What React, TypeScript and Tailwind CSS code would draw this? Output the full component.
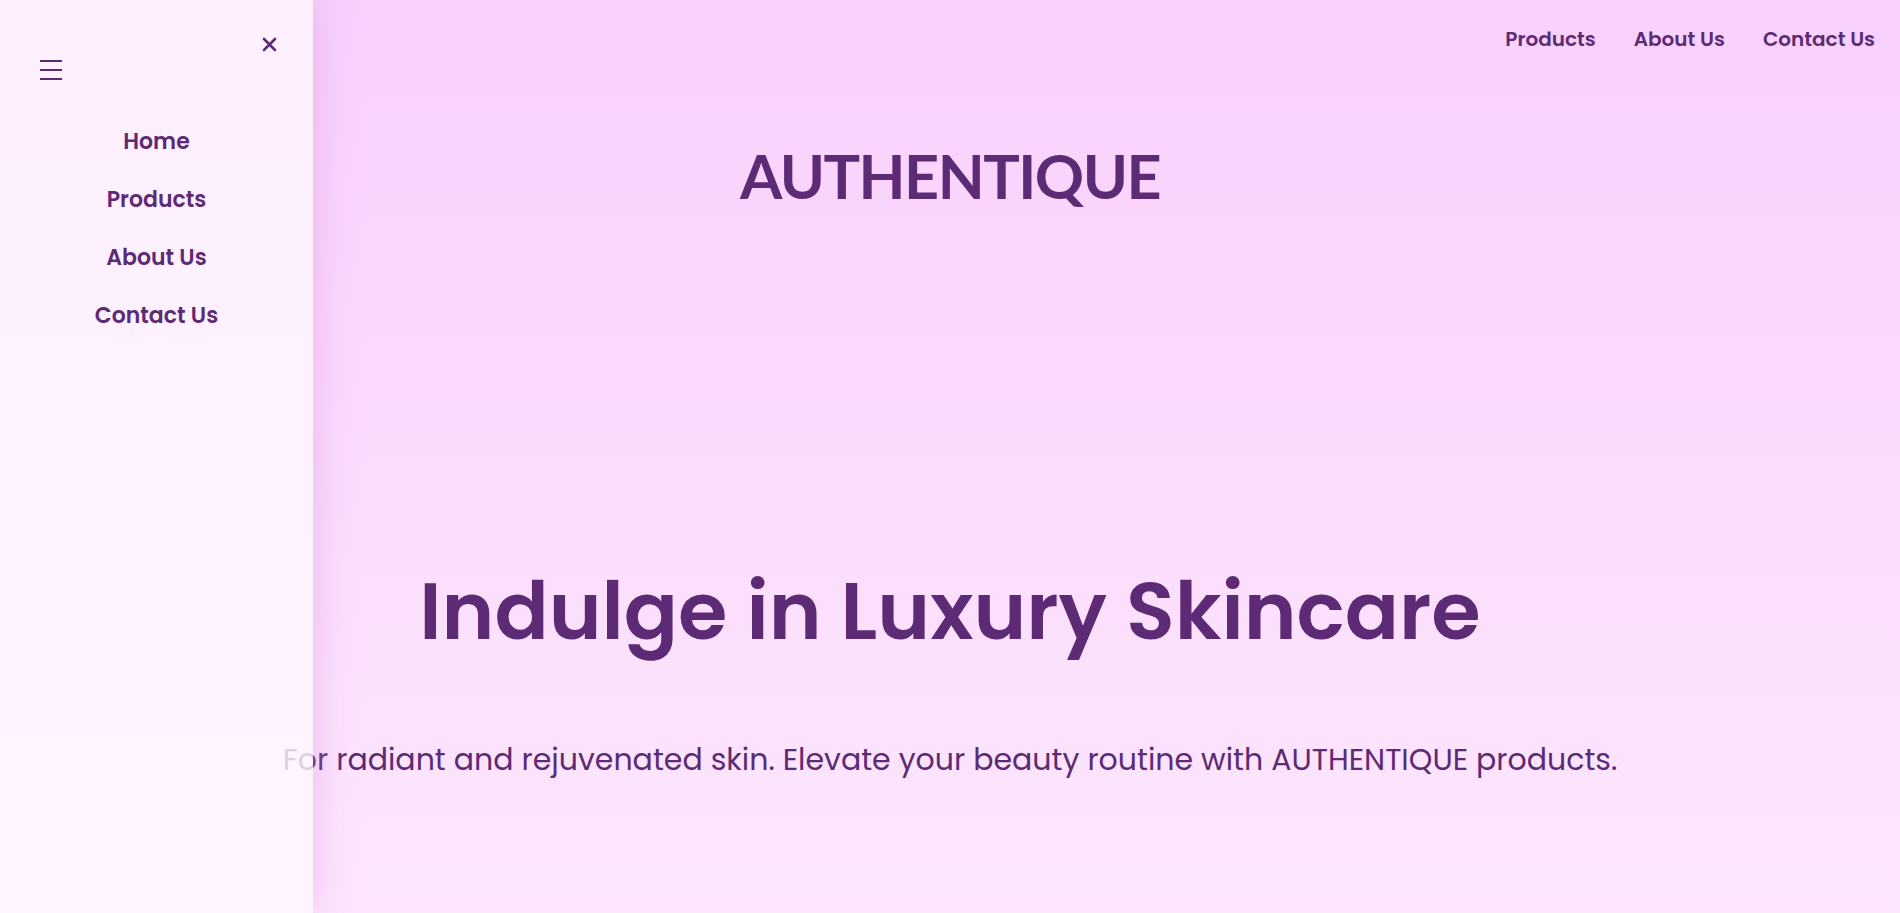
import React from "react";

const navLinks = ["Products", "About Us", "Contact Us"];
const sideLinks = ["Home", "Products", "About Us", "Contact Us"];

const body = { fontFamily: "Poppins, Inter, 'Noto Sans', sans-serif" };

const Sidebar = () => (
  <aside
    className="absolute inset-y-0 left-0 w-[313px] bg-[#fff7ff]/80 shadow-[0_0_40px_rgba(214,140,220,0.45)]"
    style={body}
  >
    <div className="relative h-[120px]">
      {/* hamburger */}
      <div className="absolute left-[40px] top-[60px] flex w-[22px] flex-col gap-[7px]">
        <span className="block h-[2px] bg-[#5d2a75]" />
        <span className="block h-[2px] bg-[#5d2a75]" />
        <span className="block h-[2px] bg-[#5d2a75]" />
      </div>
      {/* close */}
      <button className="absolute left-[260px] top-[35px] flex h-[19px] w-[19px] items-center justify-center text-[#5d2a75]">
        <svg width="15" height="15" viewBox="0 0 15 15" fill="none">
          <path d="M2 2L13 13M13 2L2 13" stroke="currentColor" strokeWidth="2.6" strokeLinecap="round" />
        </svg>
      </button>
    </div>
    <nav className="mt-[8px] flex flex-col items-center gap-[30px]">
      {sideLinks.map((l) => (
        <a key={l} className="text-[22px] leading-[28px] font-semibold text-[#5d2a75]">
          {l}
        </a>
      ))}
    </nav>
  </aside>
);

export default function App() {
  return (
    <div className="relative h-[913px] overflow-hidden bg-gradient-to-b from-[#f8d0fc] to-[#fde7fd]" style={body}>
      <header className="flex justify-end gap-[38px] pr-[25px] pt-[25px]">
        {navLinks.map((l) => (
          <a key={l} className="text-[20px] leading-[28px] font-semibold text-[#5d2a75]">
            {l}
          </a>
        ))}
      </header>

      <div className="mt-[91px] flex justify-center">
        <h1
          className="text-[61px] leading-[64px] font-bold tracking-[-1.5px] text-[#5d2a75]"
          style={{ fontFamily: "Lato, 'Noto Sans', sans-serif" }}
        >
          AUTHENTIQUE
        </h1>
      </div>

      <section className="mt-[353px] flex flex-col items-center text-center">
        <h2 className="text-[80px] leading-[100px] font-semibold text-[#5d2a75]">Indulge in Luxury Skincare</h2>
        <p className="mt-[77px] text-[30px] leading-[44px] font-normal text-[#5d2a75]">
          For radiant and rejuvenated skin. Elevate your beauty routine with AUTHENTIQUE products.
        </p>
      </section>

      <Sidebar />
    </div>
  );
}
